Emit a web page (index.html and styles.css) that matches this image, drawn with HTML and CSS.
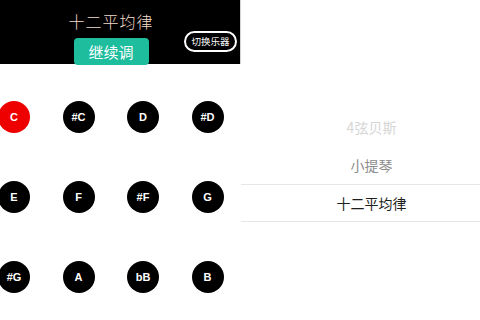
FILE: index.html
```html
<!DOCTYPE html>
<html lang="zh">
<head>
<meta charset="utf-8">
<link rel="stylesheet" href="styles.css">
</head>
<body>
<div class="app">
  <div class="left">
    <div class="header">
      <div class="title">十二平均律</div>
      <div class="continue">继续调</div>
      <div class="switch">切换乐器</div>
    </div>
    <div class="notes">
      <div class="note active">C</div>
      <div class="note">#C</div>
      <div class="note">D</div>
      <div class="note">#D</div>
      <div class="note">E</div>
      <div class="note">F</div>
      <div class="note">#F</div>
      <div class="note">G</div>
      <div class="note">#G</div>
      <div class="note">A</div>
      <div class="note">bB</div>
      <div class="note">B</div>
    </div>
  </div>
  <div class="right">
    <div class="picker">
      <div class="item far">4弦贝斯</div>
      <div class="item near">小提琴</div>
      <div class="item selected">十二平均律</div>
    </div>
  </div>
</div>
</body>
</html>
```
FILE: styles.css
```css
html, body {
  margin: 0;
  padding: 0;
  background: #fff;
}
body {
  width: 480px;
  height: 320px;
  overflow: hidden;
  font-family: "Noto Sans CJK SC", "Noto Sans", sans-serif;
}
.app {
  display: flex;
  width: 480px;
  height: 320px;
}
.left {
  width: 241px;
  flex: none;
}
.header {
  position: relative;
  box-sizing: border-box;
  height: 64px;
  background: #000;
  border-right: 1px solid #d4d4d4;
  padding-right: 18px;
  display: flex;
  flex-direction: column;
  align-items: center;
}
.title {
  margin-top: 10px;
  font-size: 16px;
  line-height: 22px;
  letter-spacing: 1px;
  font-weight: 300;
  color: #f2dccb;
}
.continue {
  margin-top: 6px;
  width: 75px;
  height: 27px;
  border-radius: 4px;
  background: #1dbd9d;
  color: #fff;
  font-size: 15px;
  line-height: 27px;
  text-align: center;
}
.switch {
  position: absolute;
  left: 184px;
  top: 31px;
  box-sizing: border-box;
  width: 53px;
  height: 21px;
  border: 2px solid #fff;
  border-radius: 11px;
  color: #fff;
  font-size: 9.5px;
  line-height: 17px;
  text-align: center;
}
.notes {
  display: grid;
  grid-template-columns: repeat(4, 32px);
  column-gap: 32.5px;
  row-gap: 48px;
  padding-top: 37px;
  margin-left: -2px;
}
.note {
  width: 32px;
  height: 32px;
  border-radius: 50%;
  background: #000;
  color: #fff;
  font-family: "Liberation Sans", Arial, sans-serif;
  font-weight: bold;
  font-size: 11px;
  line-height: 32px;
  text-align: center;
}
.note.active {
  background: #ee0000;
}
.right {
  flex: 1;
}
.picker {
  padding-top: 108px;
  display: flex;
  flex-direction: column;
}
.item {
  box-sizing: border-box;
  height: 38px;
  line-height: 38px;
  text-align: center;
  padding-left: 22px;
  font-size: 14px;
}
.item.far {
  color: #d6d6d6;
}
.item.near {
  color: #8c8c8c;
}
.item.selected {
  color: #1e1e1e;
  border-top: 1px solid #e6e6e6;
  border-bottom: 1px solid #e6e6e6;
  line-height: 36px;
}
```
